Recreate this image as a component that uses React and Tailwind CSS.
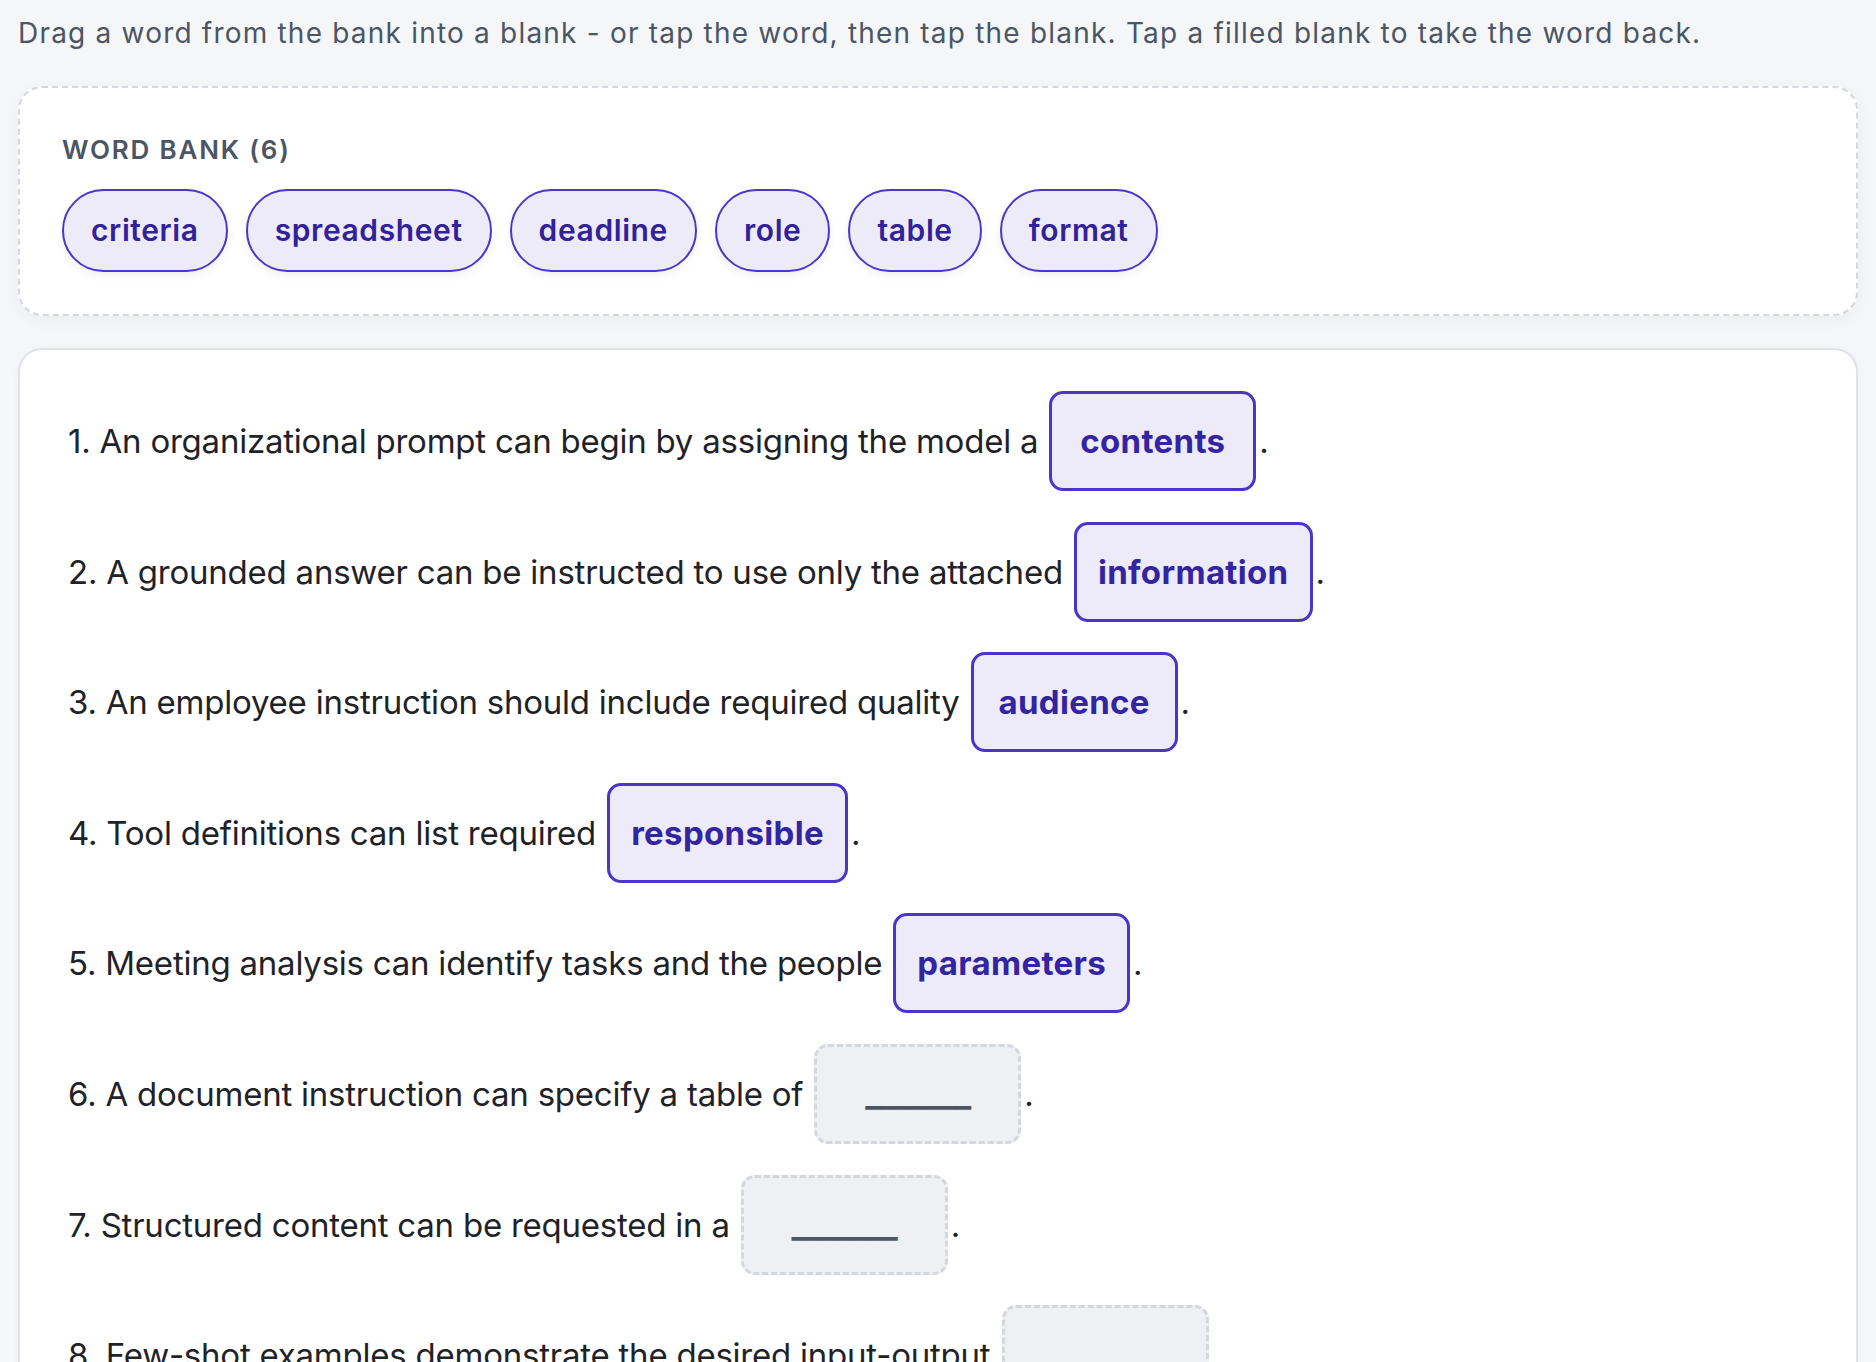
const WORDS = ['criteria', 'spreadsheet', 'deadline', 'role', 'table', 'format']

const ROWS = [
  { text: 'An organizational prompt can begin by assigning the model a', fill: 'contents' },
  { text: 'A grounded answer can be instructed to use only the attached', fill: 'information' },
  { text: 'An employee instruction should include required quality', fill: 'audience' },
  { text: 'Tool definitions can list required', fill: 'responsible' },
  { text: 'Meeting analysis can identify tasks and the people', fill: 'parameters' },
  { text: 'A document instruction can specify a table of', fill: null },
  { text: 'Structured content can be requested in a', fill: null },
  { text: 'Few-shot examples demonstrate the desired input-output', fill: null },
]

function Blank({ fill }) {
  if (fill) {
    return (
      <span className="inline-block align-baseline min-w-[207px] text-center px-[21px] py-[23px] ml-[2px] mr-[3px] rounded-[14px] border-[3px] border-[#4a35c8] bg-[#edeaf9] font-bold tracking-[0.01em] text-[#3324a0] cursor-pointer">
        {fill}
      </span>
    )
  }
  return (
    <span className="inline-block align-baseline min-w-[207px] text-center px-[21px] py-[23px] ml-[2px] mr-[3px] rounded-[14px] border-[3px] border-dashed border-[#d5d7de] bg-[#eff0f4] font-bold tracking-[-0.02em] text-[#4b5563]">
      _______
    </span>
  )
}

export default function App() {
  return (
    <div className="min-h-screen bg-[#f5f6f8] px-[18px] pt-[12px] pb-10 font-['Inter',sans-serif]">
      <p className="text-[28px] leading-[1.5] tracking-[0.043em] text-[#4b5563]">
        Drag a word from the bank into a blank - or tap the word, then tap the blank. Tap a filled blank to take the word back.
      </p>

      {/* Word bank */}
      <div className="mt-[32px] rounded-[24px] border-2 border-dashed border-[#d5d7de] bg-white p-[42px] shadow-[0_4px_18px_rgba(0,0,0,0.04)]">
        <div className="text-[26px] leading-[1.5] font-semibold uppercase tracking-[0.07em] text-[#4b5563]">
          Word bank ({WORDS.length})
        </div>
        <div className="mt-[20px] flex flex-wrap gap-[18px]">
          {WORDS.map(w => (
            <button
              key={w}
              className="rounded-full border-2 border-[#4a37c9] bg-[#eeebf9] px-[27px] py-[17px] text-[30px] leading-[1.5] font-semibold tracking-[0.02em] text-[#32229a] shadow-[0_4px_10px_rgba(0,0,0,0.06)]"
            >
              {w}
            </button>
          ))}
        </div>
      </div>

      {/* Sentences */}
      <div className="mt-[32px] rounded-[24px] border-2 border-[#dfe1e6] bg-white px-[48px] pt-[41px] pb-[48px] shadow-[0_2px_10px_rgba(0,0,0,0.03)]">
        <div className="flex flex-col gap-[30.6px]">
          {ROWS.map((r, i) => (
            <p key={i} className="text-[33px] leading-[48px] tracking-[-0.007em] text-[#1f2328]">
              {i + 1}. {r.text}{' '}
              <Blank fill={r.fill} />.
            </p>
          ))}
        </div>
      </div>
    </div>
  )
}
